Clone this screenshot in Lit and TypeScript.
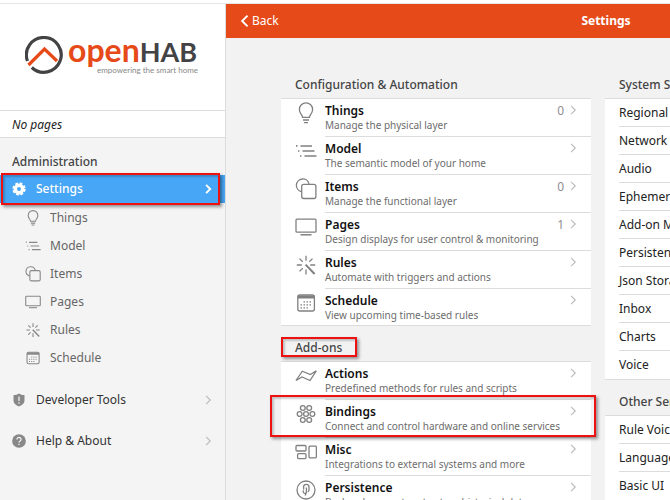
import { LitElement, html, css, svg, nothing } from "lit";
import { customElement, property } from "lit/decorators.js";

const icons: Record<string, unknown> = {
  things: svg`<path d="M7.600 15.400C7.500 12.600 4.400 11.600 4.400 7.400a6.600 6.600 0 0 1 13.200 0c0 4.200-3.100 5.200-3.200 8z"/><path d="M8 18h6M9 20.600h4"/>`,
  model: svg`<path d="M5.500 6H17M7.500 11H19.500M9.500 16H21.500"/><path d="M1 5.800h1.400M3 11h1.400M5 16h1.400" stroke-width="1.700"/>`,
  items: svg`<path d="M6.400 13.600A6.400 6.400 0 1 1 14 5.800"/><rect x="6.700" y="6.300" width="14.200" height="14.200" rx="2"/>`,
  pages: svg`<rect x="1" y="3.200" width="20" height="13" rx="1"/><path d="M5.500 18.800h11" stroke-width="1.500"/>`,
  rules: svg`<path d="M11 1.800v5M11 15.500v5M1.800 11h5M15.200 11h5M4.500 4.600l3.200 3.200M17.500 4.600l-3.200 3.200M4.500 17.400l3.200-3.200"/><path d="M10.600 10.600l9 9.400" stroke-width="2"/>`,
  schedule: svg`<rect x="2.800" y="3" width="16.600" height="16" rx="2"/><path d="M2.800 5h16.600" stroke-width="3"/><path d="M8.500 9.800h9M5.500 12.800h12M5.500 15.800h9" stroke-dasharray="1.500 1.500" stroke-width="1.300"/>`,
  actions: svg`<path d="M1 15.500 7.300 6.200l8 3.300 6-3.700-6.300 9.700-8-3.500z"/>`,
  bindings: svg`<circle cx="7.800" cy="5" r="2.400"/><circle cx="14.200" cy="5" r="2.400"/><circle cx="4.600" cy="11" r="2.400"/><circle cx="11" cy="11" r="2.400"/><circle cx="17.400" cy="11" r="2.400"/><circle cx="7.800" cy="17" r="2.400"/><circle cx="14.200" cy="17" r="2.400"/>`,
  misc: svg`<rect x="1" y="4.500" width="10" height="5.500" rx="1"/><rect x="2.600" y="12.600" width="8.400" height="5" rx="1"/><rect x="14" y="5.200" width="7.400" height="11.600" rx="1"/>`,
  persistence: svg`<circle cx="11" cy="11" r="9"/><path d="M8.600 10.500V8a2.700 2.700 0 0 1 5.400 0v2.800M8.200 11.200v1.300a1.800 1.800 0 0 0 3.200 1.200V8.600M14 10.800a2 2 0 0 1-1.200 2M10 16.500l1.400-2.800"/>`,
  gear: svg`<circle cx="11" cy="11" r="5.800" stroke-width="5.400"/><circle cx="11" cy="11" r="9" stroke-width="3" stroke-dasharray="4.270 2.800"/>`,
  shield: svg`<path d="M11 .8c2.600 2 5.400 2.400 8.600 2.400v9c0 4.600-4.600 7.400-8.600 9-4-1.600-8.600-4.400-8.600-9v-9c3.200 0 6-.400 8.600-2.400z" fill="currentColor" stroke="none"/><path d="M11 5.500v7M11 14.600v2.400" stroke="#f4f4f4" stroke-width="2"/>`,
  help: svg`<circle cx="11" cy="11" r="10.800" fill="currentColor" stroke="none"/><path d="M7.800 8.600a3.200 3 0 1 1 5 2.300c-1.200.800-1.800 1.300-1.800 2.600M11 15.200v2" stroke="#f4f4f4" stroke-width="2"/>`,
  chevron: svg`<path d="M8 4.500 14.500 11 8 17.500"/>`,
  back: svg`<path d="M15 2.500 6.500 11l8.500 8.500"/>`,
};

@customElement("oh-icon")
class OhIcon extends LitElement {
  @property() name = "";
  static styles = css`
    :host { display: block; flex: none; width: 22px; height: 22px; }
    svg { display: block; width: 100%; height: 100%; fill: none; stroke: currentColor; stroke-width: var(--stroke, 1.3); }
  `;
  render() {
    return html`<svg viewBox="0 0 22 22" aria-hidden="true">${icons[this.name]}</svg>`;
  }
}

interface Entry { icon: string; title: string; text: string; count?: number; marked?: boolean }

const configuration: Entry[] = [
  { icon: "things", title: "Things", text: "Manage the physical layer", count: 0 },
  { icon: "model", title: "Model", text: "The semantic model of your home" },
  { icon: "items", title: "Items", text: "Manage the functional layer", count: 0 },
  { icon: "pages", title: "Pages", text: "Design displays for user control & monitoring", count: 1 },
  { icon: "rules", title: "Rules", text: "Automate with triggers and actions" },
  { icon: "schedule", title: "Schedule", text: "View upcoming time-based rules" },
];
const addons: Entry[] = [
  { icon: "actions", title: "Actions", text: "Predefined methods for rules and scripts" },
  { icon: "bindings", title: "Bindings", text: "Connect and control hardware and online services", marked: true },
  { icon: "misc", title: "Misc", text: "Integrations to external systems and more" },
  { icon: "persistence", title: "Persistence", text: "Backend connectors to store historical data" },
];
const system = ["Regional Settings", "Network Settings", "Audio", "Ephemeris", "Add-on Management", "Persistence", "Json Storage", "Inbox", "Charts", "Voice"];
const other = ["Rule Voice Interpreter", "Language", "Basic UI"];
const submenu = ["Things", "Model", "Items", "Pages", "Rules", "Schedule"];

@customElement("app-root")
class AppRoot extends LitElement {
  static styles = css`
    :host {
      display: flex; box-sizing: border-box; height: 100vh; overflow: hidden; padding-top: 4px;
      background: linear-gradient(#fff 3px, #e6e6e6 3px, #e6e6e6 4px, #f2f2f2 4px);
      font: 12px/16px "Noto Sans", "Open Sans", sans-serif; color: #222;
    }
    * { box-sizing: border-box; }
    a { color: inherit; text-decoration: none; }
    ul { list-style: none; margin: 0; padding: 0; }
    h1, h2, p { margin: 0; font-size: 12px; }
    aside { flex: none; width: 226px; background: #f4f4f4; border-right: 1px solid #dcdcdc; }
    .brand { height: 106px; padding: 32px 0 0 25px; display: flex; gap: 4px; background: #fff; }
    .mark { flex: none; width: 39px; height: 39px; }
    .words { width: 130px; }
    .word { font: 700 32px/28px Lato, sans-serif; color: #e64a19; white-space: nowrap; }
    .hab { color: #434345; font-size: 27px; }
    .tag { font: 8px/8px Lato, sans-serif; color: #888; text-align: right; white-space: nowrap; }
    .none { height: 28px; padding: 6px 12px; background: #fff; border: solid #dcdcdc; border-width: 1px 0; font-style: italic; color: #222; }
    .label { padding: 16px 12px 4px; font-weight: 500; color: #444; }
    .row { display: flex; align-items: center; height: 28px; padding: 0 12px; gap: 10px; }
    .row span { flex: 1; }
    .row oh-icon { width: 14px; height: 14px; }
    .active { position: relative; background: #47a6f5; color: #fff; font-weight: 500; }
    .active .chev, .back { --stroke: 3; }
    .submenu { padding-top: 1px; }
    .sub { padding-left: 25px; gap: 9px; color: #666; --stroke: 1.5; }
    .sub oh-icon { width: 16px; height: 16px; color: #888; }
    .tool { height: 41px; padding-right: 10px; color: #333; }
    .active { padding-right: 10px; }
    .tool oh-icon { color: #888; }
    .menu { padding-top: 1px; }
    .tools { padding-top: 7px; }
    .tool .chev, .chev { color: #bbb; --stroke: 1.8; }
    .active .chev { color: #fff; }
    .mark-box { position: absolute; border: 2px solid #ee1111; box-shadow: 2px 2px 3px #0006, inset 2px 2px 2px #0003; pointer-events: none; }
    .active .mark-box { inset: -2px 5px -2px 1px; }
    main { flex: 1; min-width: 0; overflow: hidden; }
    .bar { min-width: 760px; height: 34px; display: grid; grid-template-columns: 1fr auto 1fr; align-items: center; padding: 0 12px; background: #e64a19; color: #fff; }
    .backlink { display: flex; align-items: center; }
    .back { width: 14px; height: 14px; }
    .content { min-width: 744px; display: grid; grid-template-columns: repeat(2, minmax(310px, 1fr)); gap: 14px; padding: 33px 55px 0; }
    .content h2 { position: relative; height: 27px; padding: 6px 14px 0; font-weight: 500; color: #444; }
    .content ul { background: #fff; border: solid #dcdcdc; border-width: 1px 0; }
    ul + h2 { margin-top: 8px; }
    .entry { position: relative; display: flex; gap: 8px; padding-left: 14px; height: 38px; }
    li:last-child .entry { height: 36px; }
    .entry > oh-icon { margin-top: 3px; color: #808080; }
    .body { flex: 1; display: grid; grid-template: 15px 14px / 1fr auto 14px; column-gap: 2px; padding: 4px 11px 0 0; line-height: 15px; border-bottom: 1px solid #dcdcdc; }
    li:last-child .body, li:last-child .simple { border-bottom-color: transparent; }
    .body strong { font-weight: 600; color: #111; }
    .body small { grid-column: 1 / -1; font-size: 10px; color: #6d6d6d; white-space: nowrap; }
    .count { color: #8e8e93; }
    .chev { width: 14px; height: 14px; }
    .simple { display: block; height: 28px; margin-left: 14px; padding-top: 6px; border-bottom: 1px solid #dcdcdc; color: #222; }
    .title-box { inset: 3px auto 4px 0; width: 76px; }
    .entry .mark-box { inset: -5px -5px 1px -11px; z-index: 1; }
  `;

  private entry(e: Entry) {
    return html`<li><a class="entry" href="#${e.title}">
      <oh-icon name=${e.icon}></oh-icon>
      <div class="body"><strong>${e.title}</strong><span class="count">${e.count ?? nothing}</span><oh-icon class="chev" name="chevron"></oh-icon><small>${e.text}</small></div>
      ${e.marked ? html`<span class="mark-box"></span>` : nothing}
    </a></li>`;
  }

  private simple(name: string) {
    return html`<li><a class="simple" href="#${name}">${name}</a></li>`;
  }

  render() {
    return html`
      <aside>
        <div class="brand">
          <svg class="mark" viewBox="0 0 39 39" fill="none" aria-hidden="true">
            <path d="M2.500 25A17.400 17.400 0 1 1 6.800 31.500" stroke="#434345" stroke-width="3.200"/>
            <path d="M3.500 29 19.500 13 32 25" stroke="#e64a19" stroke-width="3.200"/>
          </svg>
          <div class="words">
            <div class="word">open<span class="hab">HAB</span></div>
            <div class="tag">empowering the smart home</div>
          </div>
        </div>
        <p class="none">No pages</p>
        <h2 class="label">Administration</h2>
        <nav class="menu">
          <a class="row active" href="#settings"><oh-icon name="gear"></oh-icon><span>Settings</span><oh-icon class="chev" name="chevron"></oh-icon><i class="mark-box"></i></a>
          <div class="submenu">
            ${submenu.map((n) => html`<a class="row sub" href="#${n}"><oh-icon name=${n.toLowerCase()}></oh-icon><span>${n}</span></a>`)}
          </div>
          <div class="tools">
            <a class="row tool" href="#developer"><oh-icon name="shield"></oh-icon><span>Developer Tools</span><oh-icon class="chev" name="chevron"></oh-icon></a>
            <a class="row tool" href="#help"><oh-icon name="help"></oh-icon><span>Help &amp; About</span><oh-icon class="chev" name="chevron"></oh-icon></a>
          </div>
        </nav>
      </aside>
      <main>
        <header class="bar">
          <a class="backlink" href="#back"><oh-icon class="back" name="back"></oh-icon>Back</a>
          <h1>Settings</h1>
        </header>
        <div class="content">
          <section>
            <h2>Configuration &amp; Automation</h2>
            <ul>${configuration.map((e) => this.entry(e))}</ul>
            <h2>Add-ons<span class="mark-box title-box"></span></h2>
            <ul>${addons.map((e) => this.entry(e))}</ul>
          </section>
          <section>
            <h2>System Services</h2>
            <ul>${system.map((n) => this.simple(n))}</ul>
            <h2>Other Services</h2>
            <ul>${other.map((n) => this.simple(n))}</ul>
          </section>
        </div>
      </main>
    `;
  }
}
